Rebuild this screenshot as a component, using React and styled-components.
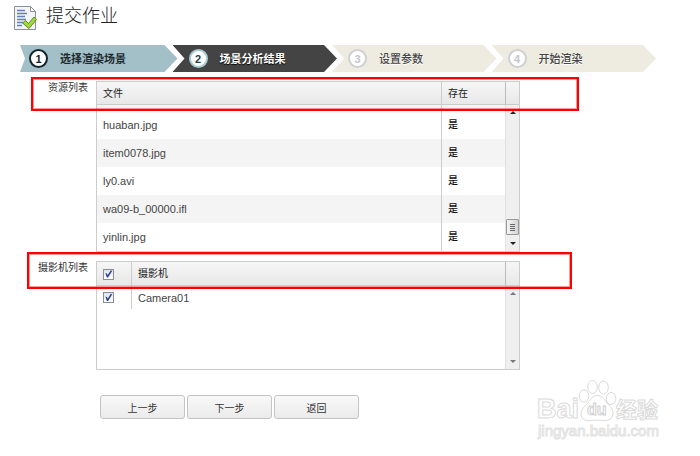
import React, { useState } from 'react';
import styled, { createGlobalStyle } from 'styled-components';

const GlobalStyle = createGlobalStyle`
  * {
    box-sizing: border-box;
  }
  body {
    margin: 0;
    background: #fff;
    color: #333;
    font-family: "Liberation Sans", "Noto Sans CJK SC", sans-serif;
    font-size: 10px;
    line-height: 14px;
  }
`;

const Page = styled.div`
  position: relative;
  min-height: 100vh;
  overflow: hidden;
`;

const Header = styled.header`
  display: flex;
  align-items: center;
  gap: 9px;
  height: 45px;
  padding: 0 14px 9px;
`;

const Title = styled.h1`
  margin: 0;
  padding-bottom: 4px;
  font-size: 18px;
  line-height: 24px;
  font-weight: 300;
  color: #222;
`;

const Steps = styled.ol`
  display: flex;
  list-style: none;
  margin: 0 44px 9px 20px;
  padding: 0;
`;

const stepColors = {
  done: { background: '#a3c0c9', text: '#1d2b30', ring: '#14242b', number: '#14242b', shadow: 'none' },
  active: { background: '#444', text: '#fff', ring: '#a9c9d3', number: '#24424e', shadow: '0 1px 1px #000' },
  todo: { background: '#eeece1', text: '#444', ring: '#d0d0d4', number: '#c4c4cc', shadow: '0 1px 0 #fff' },
};

const Step = styled.li`
  flex: 1;
  display: flex;
  align-items: center;
  gap: 12px;
  height: 27px;
  padding-left: ${props => props.$notch + 4}px;
  background: ${props => stepColors[props.$state].background};
  color: ${props => stepColors[props.$state].text};
  text-shadow: ${props => stepColors[props.$state].shadow};
  font-size: 11px;
  font-weight: ${props => (props.$state === 'todo' ? 500 : 700)};
  white-space: nowrap;
  clip-path: polygon(
    0 0,
    calc(100% - 13px) 0,
    100% 50%,
    calc(100% - 13px) 100%,
    0 100%,
    ${props => props.$notch}px 50%
  );
  & + & {
    margin-left: -5px;
  }
`;

const StepNumber = styled.span`
  display: flex;
  align-items: center;
  justify-content: center;
  width: 19px;
  height: 19px;
  border: 2px solid ${props => stepColors[props.$state].ring};
  border-radius: 50%;
  background: #fff;
  color: ${props => stepColors[props.$state].number};
  text-shadow: none;
  font-weight: 700;
`;

const FormRow = styled.section`
  position: relative;
  display: grid;
  grid-template-columns: 88px minmax(0, 424px);
  column-gap: 8px;
  margin-bottom: 9px;
`;

const RowLabel = styled.h2`
  margin: 0;
  font-size: 10px;
  font-weight: 400;
  text-align: right;
`;

const Panel = styled.div`
  display: flex;
  align-items: flex-start;
  min-height: ${props => props.$minHeight || 0}px;
  border: 1px solid #ccc;
`;

const Table = styled.table`
  flex: 1;
  table-layout: fixed;
  border-spacing: 0;
  color: #444;
`;

const HeadCell = styled.th`
  width: ${props => (props.$width ? `${props.$width}px` : 'auto')};
  height: ${props => props.$height}px;
  padding: 1px 6px 0;
  border-bottom: 1px solid #ccc;
  background: linear-gradient(#f6f6f6, #e8e8e8);
  color: #222;
  font-weight: 400;
  text-align: left;
  & + & {
    border-left: 1px solid #ccc;
  }
`;

const Row = styled.tr`
  height: ${props => props.$height}px;
  background: ${props => (props.$shaded ? '#f4f4f4' : '#fff')};
`;

const Cell = styled.td`
  padding: 0 6px;
  font-size: ${props => (props.$flag ? 10 : 11)}px;
  font-weight: ${props => (props.$flag ? 500 : 400)};
  color: ${props => (props.$flag ? '#111' : '#444')};
  & + & {
    border-left: 1px solid #ccc;
  }
`;

const Checkbox = styled.input`
  appearance: none;
  display: block;
  width: 11px;
  height: 11px;
  margin: 0;
  border: 1px solid #8a8f96;
  background: #eef0f3;
  &:checked {
    background: linear-gradient(#dfe3e8, #fff);
  }
  &:checked::before {
    content: '';
    display: block;
    width: 9px;
    height: 9px;
    background: #2a3f8f;
    clip-path: polygon(15% 40%, 32% 45%, 42% 60%, 76% 8%, 90% 18%, 45% 90%, 32% 90%);
  }
`;

const Gutter = styled.div`
  align-self: stretch;
  display: flex;
  flex-direction: column;
  width: 14px;
`;

const GutterHead = styled.div`
  height: ${props => props.$height}px;
  border-left: 1px solid #bbb;
  border-bottom: 1px solid #ccc;
  background: linear-gradient(#f6f6f6, #e8e8e8);
`;

const Track = styled.div`
  flex: 1;
  display: flex;
  flex-direction: column;
  align-items: center;
  padding: 4px 0;
  border-left: 1px solid #e2e2e2;
  background: #efefef;
`;

const ArrowButton = styled.button`
  display: flex;
  align-items: center;
  justify-content: center;
  width: 12px;
  height: 7px;
  padding: 0;
  border: none;
  background: none;
  color: ${props => (props.$active ? '#222' : '#777')};
`;

const Spacer = styled.div`
  flex: 1;
`;

const Thumb = styled.div`
  display: flex;
  flex-direction: column;
  align-items: center;
  justify-content: center;
  gap: 1px;
  width: 13px;
  height: 16px;
  margin-bottom: 5px;
  border: 1px solid #999;
  border-radius: 1px;
  background: linear-gradient(90deg, #f4f4f4, #d4d4d8);
`;

const Grip = styled.span`
  width: 5px;
  height: 1px;
  background: #666;
`;

const Highlight = styled.div`
  position: absolute;
  top: ${props => props.$top}px;
  left: ${props => props.$left}px;
  width: ${props => props.$width}px;
  height: ${props => props.$height}px;
  border: 2px solid #f00;
  box-shadow: inset 0 0 0 1px rgba(255, 0, 0, 0.4);
  pointer-events: none;
`;

const Actions = styled.div`
  display: flex;
  gap: 2px;
  padding: 16px 0 0 100px;
`;

const Button = styled.button`
  width: 85px;
  height: 24px;
  padding: 1px 0 0;
  border: 1px solid #c4c4c4;
  border-radius: 3px;
  background: linear-gradient(#f8f8f8, #ebebeb);
  color: #333;
  font-family: inherit;
  font-size: 10px;
`;

const Watermark = styled.div`
  position: absolute;
  right: 38px;
  bottom: 12px;
  svg {
    display: block;
  }
`;

function DocumentIcon() {
  return (
    <svg width="23" height="25" viewBox="0 0 23 25" aria-hidden="true">
      <path d="M.5.5h16l5 5v18H.5z" fill="#f3f4f5" stroke="#8d9094" />
      <path d="M16.500.5v5h5z" fill="#fff" stroke="#8d9094" strokeLinejoin="round" />
      <path d="M3 4.500h8M3 7.500h10M3 10.500h8M3 13.500h9M3 16.500h6M3 19.500h5" stroke="#6480b4" strokeWidth="1.500" />
      <path d="M8.500 17l3-2.500 3 3L20 11l2.500 2.500L15 22.500z" fill="#a5d63c" stroke="#5d8c1e" strokeLinejoin="round" />
    </svg>
  );
}

function Arrow({ down }) {
  return (
    <svg width="6" height="3" viewBox="0 0 6 3" aria-hidden="true">
      <path d={down ? 'M0 0h6L3 3z' : 'M0 3h6L3 0z'} fill="currentColor" />
    </svg>
  );
}

function BaiduLogo() {
  return (
    <svg width="126" height="66" viewBox="0 0 126 66" fill="#fff" stroke="#dadada">
      <g fontFamily="Liberation Sans, Noto Sans CJK SC, sans-serif" fontWeight="700">
        <text x="1" y="40" fontSize="27">Bai</text>
        <text x="80" y="39" fontSize="21">经验</text>
      </g>
      <ellipse cx="48" cy="18" rx="4.800" ry="6.200" />
      <ellipse cx="56.500" cy="9" rx="4.800" ry="6.500" />
      <ellipse cx="67.500" cy="9.500" rx="4.800" ry="6.500" />
      <ellipse cx="75" cy="20.500" rx="4.800" ry="6" />
      <path d="M61 17.500c5 0 7 3.500 10 7.500 3 3 6.500 6 6 11-1 6-6 7-10 6.500-4-.5-8-.5-12 0-5 .5-10-.5-10-6.500 0-5 4-8 7-11 3-4 4-7.500 9-7.500z" />
      <text x="51" y="37" fontSize="16" fontFamily="Liberation Sans, sans-serif" fontWeight="700" stroke="#d0d0d0">du</text>
      <text x="2" y="58" fontSize="15" fontFamily="Liberation Sans, sans-serif" stroke="#e2e2e2">jingyan.baidu.com</text>
    </svg>
  );
}

function Scrollbar({ headHeight, thumb }) {
  return (
    <Gutter>
      <GutterHead $height={headHeight} />
      <Track>
        <ArrowButton type="button" aria-label="向上滚动" $active={thumb}><Arrow /></ArrowButton>
        <Spacer />
        {thumb && <Thumb><Grip /><Grip /><Grip /><Grip /></Thumb>}
        <ArrowButton type="button" aria-label="向下滚动" $active={thumb}><Arrow down /></ArrowButton>
      </Track>
    </Gutter>
  );
}

const steps = [
  { label: '选择渲染场景', state: 'done' },
  { label: '场景分析结果', state: 'active' },
  { label: '设置参数', state: 'todo' },
  { label: '开始渲染', state: 'todo' },
];

const files = ['huaban.jpg', 'item0078.jpg', 'ly0.avi', 'wa09-b_00000.ifl', 'yinlin.jpg'];

export default function App() {
  const [selected, setSelected] = useState(true);
  const toggle = e => setSelected(e.target.checked);

  return (
    <Page>
      <GlobalStyle />
      <Header>
        <DocumentIcon />
        <Title>提交作业</Title>
      </Header>
      <Steps>
        {steps.map((step, i) => (
          <Step key={step.label} $state={step.state} $notch={i === 0 ? 5 : 12}>
            <StepNumber $state={step.state}>{i + 1}</StepNumber>
            {step.label}
          </Step>
        ))}
      </Steps>
      <FormRow>
        <RowLabel id="files-label">资源列表</RowLabel>
        <Panel>
          <Table aria-labelledby="files-label">
            <thead>
              <tr>
                <HeadCell $height={23}>文件</HeadCell>
                <HeadCell $height={23} $width={64}>存在</HeadCell>
              </tr>
            </thead>
            <tbody>
              {/* tail of the row scrolled out of view */}
              <Row $height={6} $shaded>
                <Cell />
                <Cell />
              </Row>
              {files.map((file, i) => (
                <Row key={file} $height={28} $shaded={i % 2 === 1}>
                  <Cell>{file}</Cell>
                  <Cell $flag>是</Cell>
                </Row>
              ))}
            </tbody>
          </Table>
          <Scrollbar headHeight={23} thumb />
        </Panel>
        <Highlight $top={-4} $left={31} $width={548} $height={34} />
      </FormRow>
      <FormRow>
        <RowLabel id="cameras-label">摄影机列表</RowLabel>
        <Panel $minHeight={109}>
          <Table aria-labelledby="cameras-label">
            <thead>
              <tr>
                <HeadCell $height={24} $width={34}>
                  <Checkbox type="checkbox" aria-label="全选" checked={selected} onChange={toggle} />
                </HeadCell>
                <HeadCell $height={24}>摄影机</HeadCell>
              </tr>
            </thead>
            <tbody>
              <Row $height={23}>
                <Cell>
                  <Checkbox id="camera01" type="checkbox" checked={selected} onChange={toggle} />
                </Cell>
                <Cell><label htmlFor="camera01">Camera01</label></Cell>
              </Row>
            </tbody>
          </Table>
          <Scrollbar headHeight={24} />
        </Panel>
        <Highlight $top={-9} $left={27} $width={545} $height={37} />
      </FormRow>
      <Actions>
        <Button type="button">上一步</Button>
        <Button type="button">下一步</Button>
        <Button type="button">返回</Button>
      </Actions>
      <Watermark>
        <BaiduLogo />
      </Watermark>
    </Page>
  );
}
